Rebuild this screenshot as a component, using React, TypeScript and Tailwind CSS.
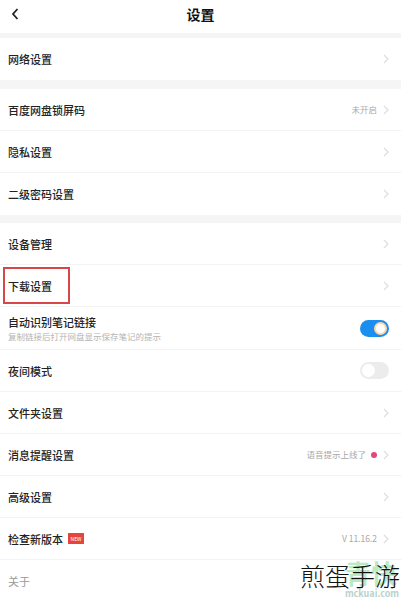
import * as React from "react";

type Row = {
  label: string;
  sub?: string;
  value?: string;
  dot?: boolean;
  badge?: boolean;
  toggle?: "on" | "off";
  muted?: boolean;
  boxed?: boolean;
  noArrow?: boolean;
};

const sections: Row[][] = [
  [{ label: "网络设置" }],
  [
    { label: "百度网盘锁屏码", value: "未开启" },
    { label: "隐私设置" },
    { label: "二级密码设置" },
  ],
  [
    { label: "设备管理" },
    { label: "下载设置", boxed: true },
    { label: "自动识别笔记链接", sub: "复制链接后打开网盘显示保存笔记的提示", toggle: "on" },
    { label: "夜间模式", toggle: "off" },
    { label: "文件夹设置" },
    { label: "消息提醒设置", value: "语音提示上线了", dot: true },
    { label: "高级设置" },
    { label: "检查新版本", badge: true, value: "V 11.16.2" },
    { label: "关于", muted: true, noArrow: true },
  ],
];

const Chevron = () => (
  <svg width="6" height="10" viewBox="0 0 6 10" className="ml-1.5 shrink-0">
    <path d="M1 1l4 4-4 4" fill="none" stroke="#dedede" strokeWidth="1.2" />
  </svg>
);

const Toggle = ({ on }: { on: boolean }) =>
  on ? (
    <div className="flex h-[17px] w-[29px] items-center justify-end rounded-full bg-[#1a8ff0] pr-[2px]">
      <div className="size-[13px] rounded-full border-2 border-[#ffd9a8] bg-white" />
    </div>
  ) : (
    <div className="flex h-[17px] w-[29px] items-center rounded-full bg-[#ececec] pl-[2px]">
      <div className="size-[13px] rounded-full bg-white" />
    </div>
  );

function SettingRow({ row, last }: { row: Row; last: boolean }) {
  return (
    <div
      className={`relative flex items-center bg-white pl-[8px] pr-[12px] ${
        row.sub ? "h-[43px]" : "h-[42px]"
      } ${last ? "" : "border-b border-[#f3f3f3]"}`}
    >
      {row.boxed && (
        <div className="absolute left-[3px] top-[2px] h-[37px] w-[67px] border-2 border-[#d8464a]" />
      )}
      <div className="flex min-w-0 flex-1 flex-col">
        <div className="flex items-center">
          <span
            className={`text-[11px] leading-[14px] ${
              row.muted ? "font-normal text-[#9a9a9a]" : "font-medium text-[#222]"
            }`}
          >
            {row.label}
          </span>
          {row.badge && (
            <span className="ml-[5px] flex h-[11px] w-[16px] items-center justify-center bg-[#e5453a] text-[5px] leading-none text-white">
              NEW
            </span>
          )}
        </div>
        {row.sub && (
          <span className="mt-[2px] text-[8.5px] leading-[11px] text-[#b4b4b4]">{row.sub}</span>
        )}
      </div>
      {row.value && <span className="text-[8.5px] text-[#a8a8a8]">{row.value}</span>}
      {row.dot && <span className="ml-[5px] size-[6px] rounded-full bg-[#e2467a]" />}
      {row.toggle ? (
        <Toggle on={row.toggle === "on"} />
      ) : row.noArrow ? null : (
        <Chevron />
      )}
    </div>
  );
}

export default function App() {
  return (
    <div
      className="relative h-[600px] w-[401px] overflow-hidden bg-[#f5f5f5]"
      style={{ fontFamily: '"Noto Sans CJK SC", "Noto Sans", sans-serif' }}
    >
      <div className="relative flex h-[33px] items-start justify-center bg-white pt-[4px]">
        <svg width="8" height="12" viewBox="0 0 8 12" className="absolute left-[11px] top-[8px]">
          <path d="M6.5 1L2 6l4.5 5" fill="none" stroke="#222" strokeWidth="1.8" />
        </svg>
        <span className="text-[14px] font-bold leading-[20px] text-[#111]">设置</span>
      </div>
      <div className="flex flex-col pt-[5px]">
        {sections.map((sec, i) => (
          <div key={i} className={i === 0 ? "" : i === 1 ? "mt-[9px]" : "mt-[8px]"}>
            {sec.map((row, j) => (
              <SettingRow key={row.label} row={row} last={j === sec.length - 1} />
            ))}
          </div>
        ))}
      </div>
      <div className="absolute bottom-[4px] right-[0px] h-[34px] w-[104px]">
        <span className="absolute right-[4px] top-[-2px] text-[26px] font-bold leading-none text-[#8fdc9a] opacity-60">
          青快
        </span>
        <span className="absolute bottom-[-2px] right-[2px] text-[9px] font-bold leading-none text-[#a9c7c0] opacity-80">
          mckuai.com
        </span>
        <span className="absolute right-[1px] top-[1px] text-[25px] font-light leading-none text-[#111]">
          煎蛋手游
        </span>
      </div>
    </div>
  );
}
